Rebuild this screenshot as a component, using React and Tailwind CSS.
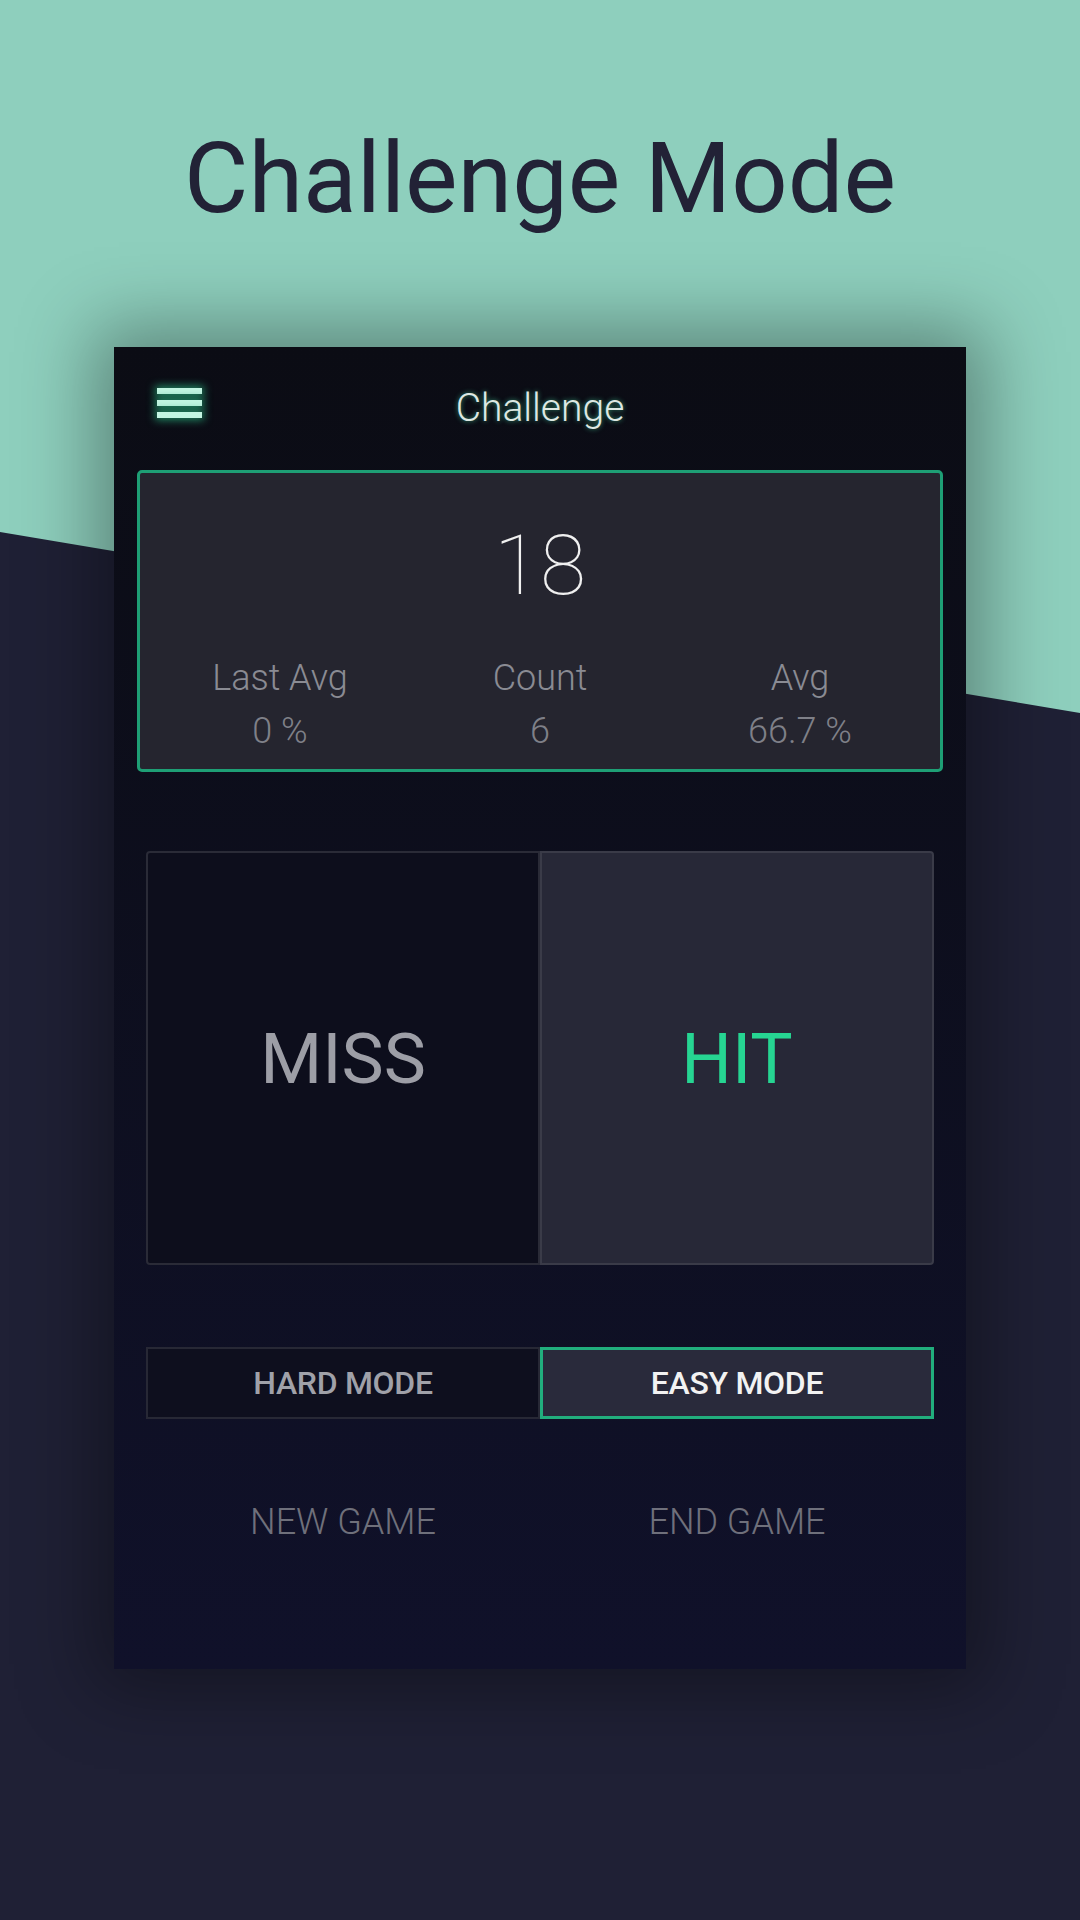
export default function App() {
  const font = { fontFamily: "Roboto, 'Noto Sans', sans-serif" };
  return (
    <div className="relative w-[1080px] h-[1920px] overflow-hidden bg-[#8ecfbd]" style={font}>
      <svg className="absolute inset-0" width="1080" height="1920" viewBox="0 0 1080 1920">
        <polygon points="0,532 1080,713 1080,1920 0,1920" fill="#1f2035" />
      </svg>
      <div className="relative flex flex-col items-center">
        <h1 className="mt-[129px] text-[99px] leading-none font-normal text-[#222236]">Challenge Mode</h1>
        <div className="mt-[119px] w-[852px] h-[1322px] flex flex-col bg-gradient-to-b from-[#0b0c14] to-[#10112a] shadow-[0_0_70px_20px_rgba(0,0,0,0.35)]">
          <div className="grid grid-cols-3 h-[123px] pt-[41px]">
            <div className="pl-[43px]">
              <div className="flex flex-col gap-[6px] w-[45px]">
                <div className="h-[6px] bg-[#c3f5e2] shadow-[0_0_8px_2px_rgba(40,170,120,0.8)]" />
                <div className="h-[6px] bg-[#c3f5e2] shadow-[0_0_8px_2px_rgba(40,170,120,0.8)]" />
                <div className="h-[6px] bg-[#c3f5e2] shadow-[0_0_8px_2px_rgba(40,170,120,0.8)]" />
              </div>
            </div>
            <div className="text-center mt-[1px] text-[39px] leading-none font-light text-[#dde8e3] [text-shadow:0_0_5px_rgba(60,180,135,0.85)]">
              Challenge
            </div>
            <div />
          </div>
          <div className="mx-[23px] h-[302px] border-[3px] border-[#1e9f75] rounded-[5px] bg-[#25252f] flex flex-col items-center">
            <div className="mt-[51px] text-[84px] leading-none font-thin text-[#f0f0f0]">18</div>
            <div className="mt-[52px] w-full px-[10px] grid grid-cols-3 text-[36px] leading-none font-light text-[#8a8b93] text-center">
              <div>Last Avg</div>
              <div>Count</div>
              <div>Avg</div>
            </div>
            <div className="mt-[17px] w-full px-[10px] grid grid-cols-3 text-[36px] leading-none font-light text-[#7f8088] text-center">
              <div>0 %</div>
              <div>6</div>
              <div>66.7 %</div>
            </div>
          </div>
          <div className="mx-[32px] mt-[79px] grid grid-cols-2 h-[414px]">
            <div className="flex items-center justify-center bg-[#0d0e1c] border-2 border-[#2a2b37] rounded-l-[4px]">
              <span className="text-[71px] leading-none text-[#9d9ea6]">MISS</span>
            </div>
            <div className="flex items-center justify-center bg-[#272837] border-2 border-[#3a3b48] rounded-r-[4px]">
              <span className="text-[71px] leading-none text-[#26d592]">HIT</span>
            </div>
          </div>
          <div className="mx-[32px] mt-[82px] grid grid-cols-2 h-[72px]">
            <div className="flex items-center justify-center border-2 border-[#272835] bg-[#0e0f1e]">
              <span className="text-[32px] leading-none font-medium text-[#a0a1a9] tracking-[-0.3px]">HARD MODE</span>
            </div>
            <div className="flex items-center justify-center border-[3px] border-[#21ae7d] bg-[#292a3b]">
              <span className="text-[32px] leading-none font-medium text-[#f2f2f2] tracking-[-0.3px]">EASY MODE</span>
            </div>
          </div>
          <div className="mx-[32px] mt-[85px] grid grid-cols-2 text-center text-[36px] leading-none font-light text-[#6f707b]">
            <div>NEW GAME</div>
            <div>END GAME</div>
          </div>
        </div>
      </div>
    </div>
  );
}
